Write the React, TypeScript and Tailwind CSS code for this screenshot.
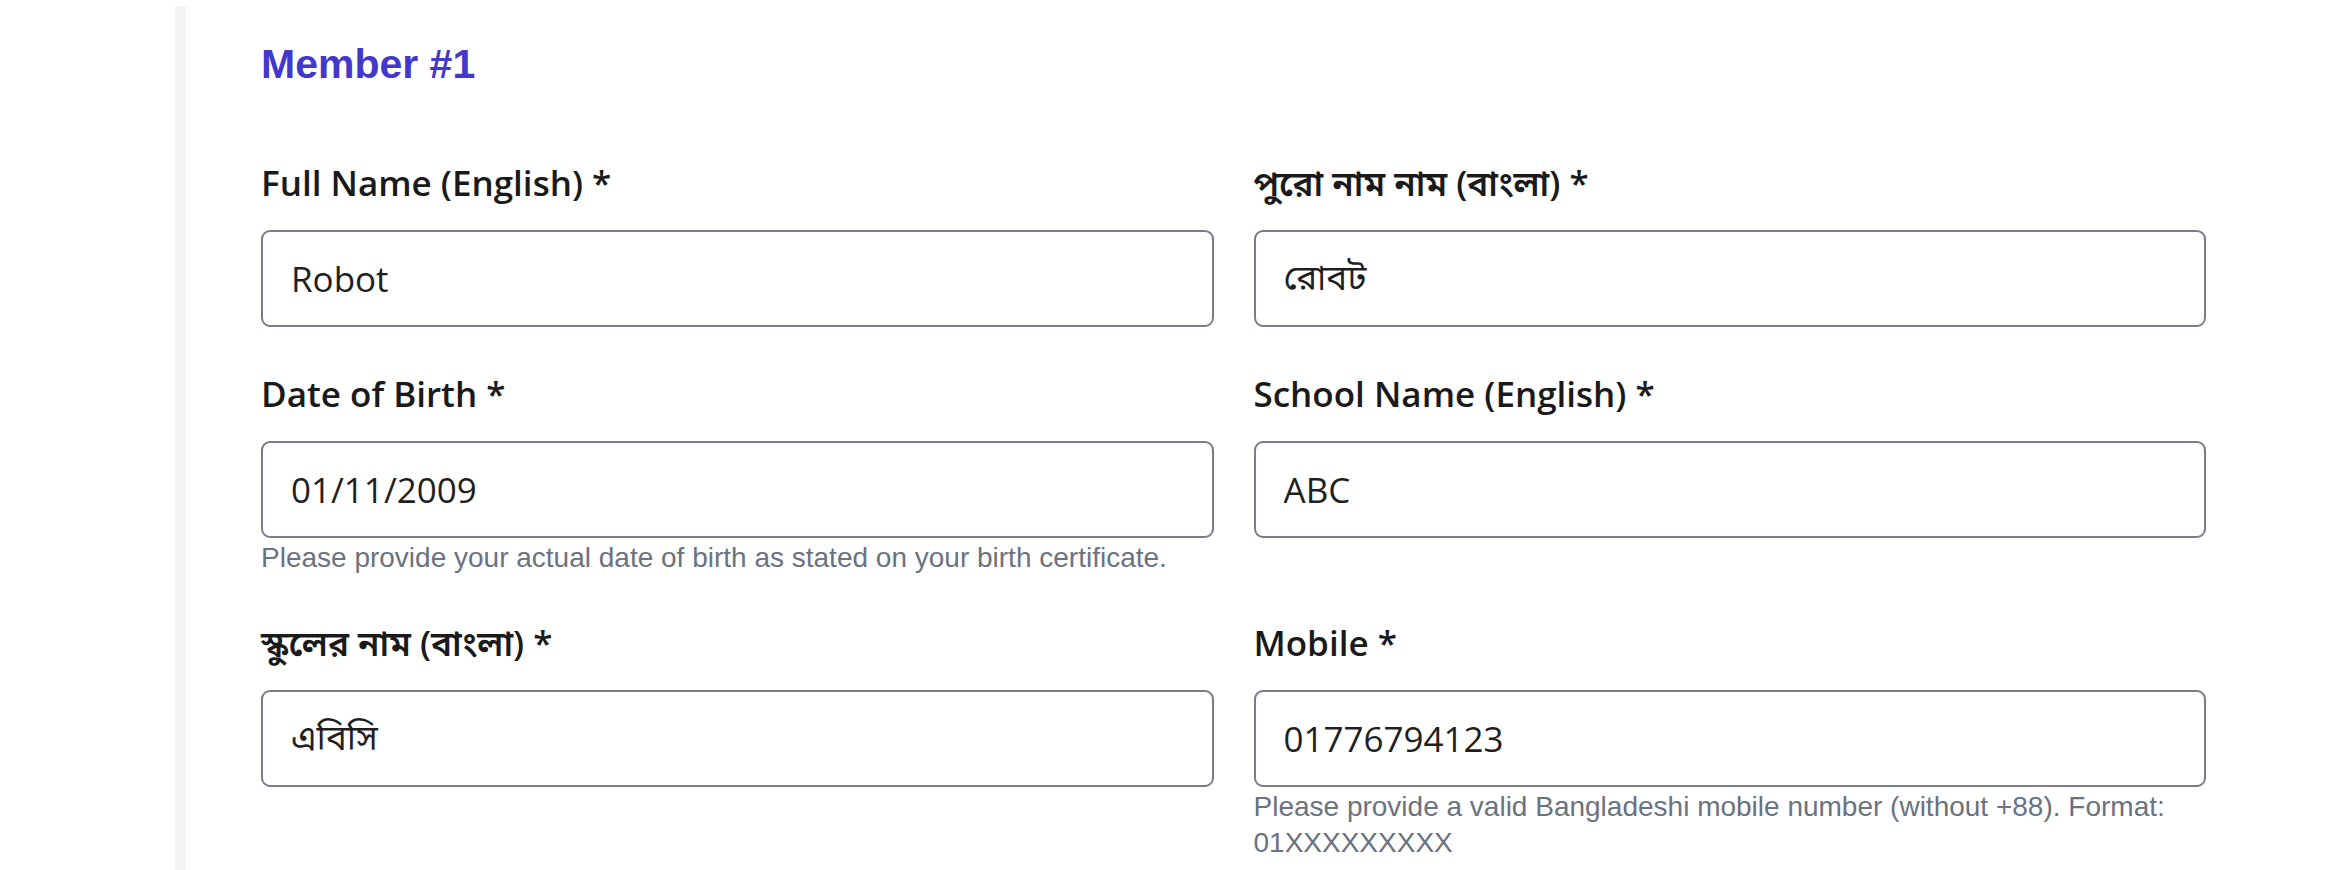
const fields = [
  { label: "Full Name (English) *", value: "Robot" },
  { label: "পুরো নাম নাম (বাংলা) *", value: "রোবট" },
  {
    label: "Date of Birth *",
    value: "01/11/2009",
    help: "Please provide your actual date of birth as stated on your birth certificate.",
  },
  { label: "School Name (English) *", value: "ABC" },
  { label: "স্কুলের নাম (বাংলা) *", value: "এবিসি" },
  {
    label: "Mobile *",
    value: "01776794123",
    help: "Please provide a valid Bangladeshi mobile number (without +88). Format: 01XXXXXXXXX",
  },
];

function Field({ label, value, help }: { label: string; value: string; help?: string }) {
  return (
    <div>
      <label className="block mb-[23px] text-[35px] leading-[48px] font-semibold text-[#1a1a1a] font-['Open_Sans','Noto_Sans_Bengali',sans-serif]">
        {label}
      </label>
      <input
        type="text"
        defaultValue={value}
        className="block w-full h-[97px] px-[28px] border-2 border-[#767c89] rounded-[9px] bg-white text-[35px] text-[#1f1f1f] font-['Open_Sans','Noto_Sans_Bengali',sans-serif] outline-none"
      />
      {help && (
        <p className="mt-[2px] text-[28px] leading-[36px] text-[#6b7280] font-['Liberation_Sans',Arial,sans-serif]">
          {help}
        </p>
      )}
    </div>
  );
}

export default function App() {
  return (
    <div className="min-h-[870px] bg-white pt-[6px] pl-[175px] pr-[144px]">
      <div className="min-h-[864px] border-l-[11px] border-[#f3f4f6] pl-[75px] pt-[38px]">
        <h2 className="mb-[74px] text-[41px] leading-none font-bold text-[#4338ca] font-['Liberation_Sans',Arial,sans-serif]">
          Member #1
        </h2>
        <div className="grid grid-cols-2 gap-x-[40px] gap-y-[43px] items-start">
          {fields.map((f) => (
            <Field key={f.label} {...f} />
          ))}
        </div>
      </div>
    </div>
  );
}
